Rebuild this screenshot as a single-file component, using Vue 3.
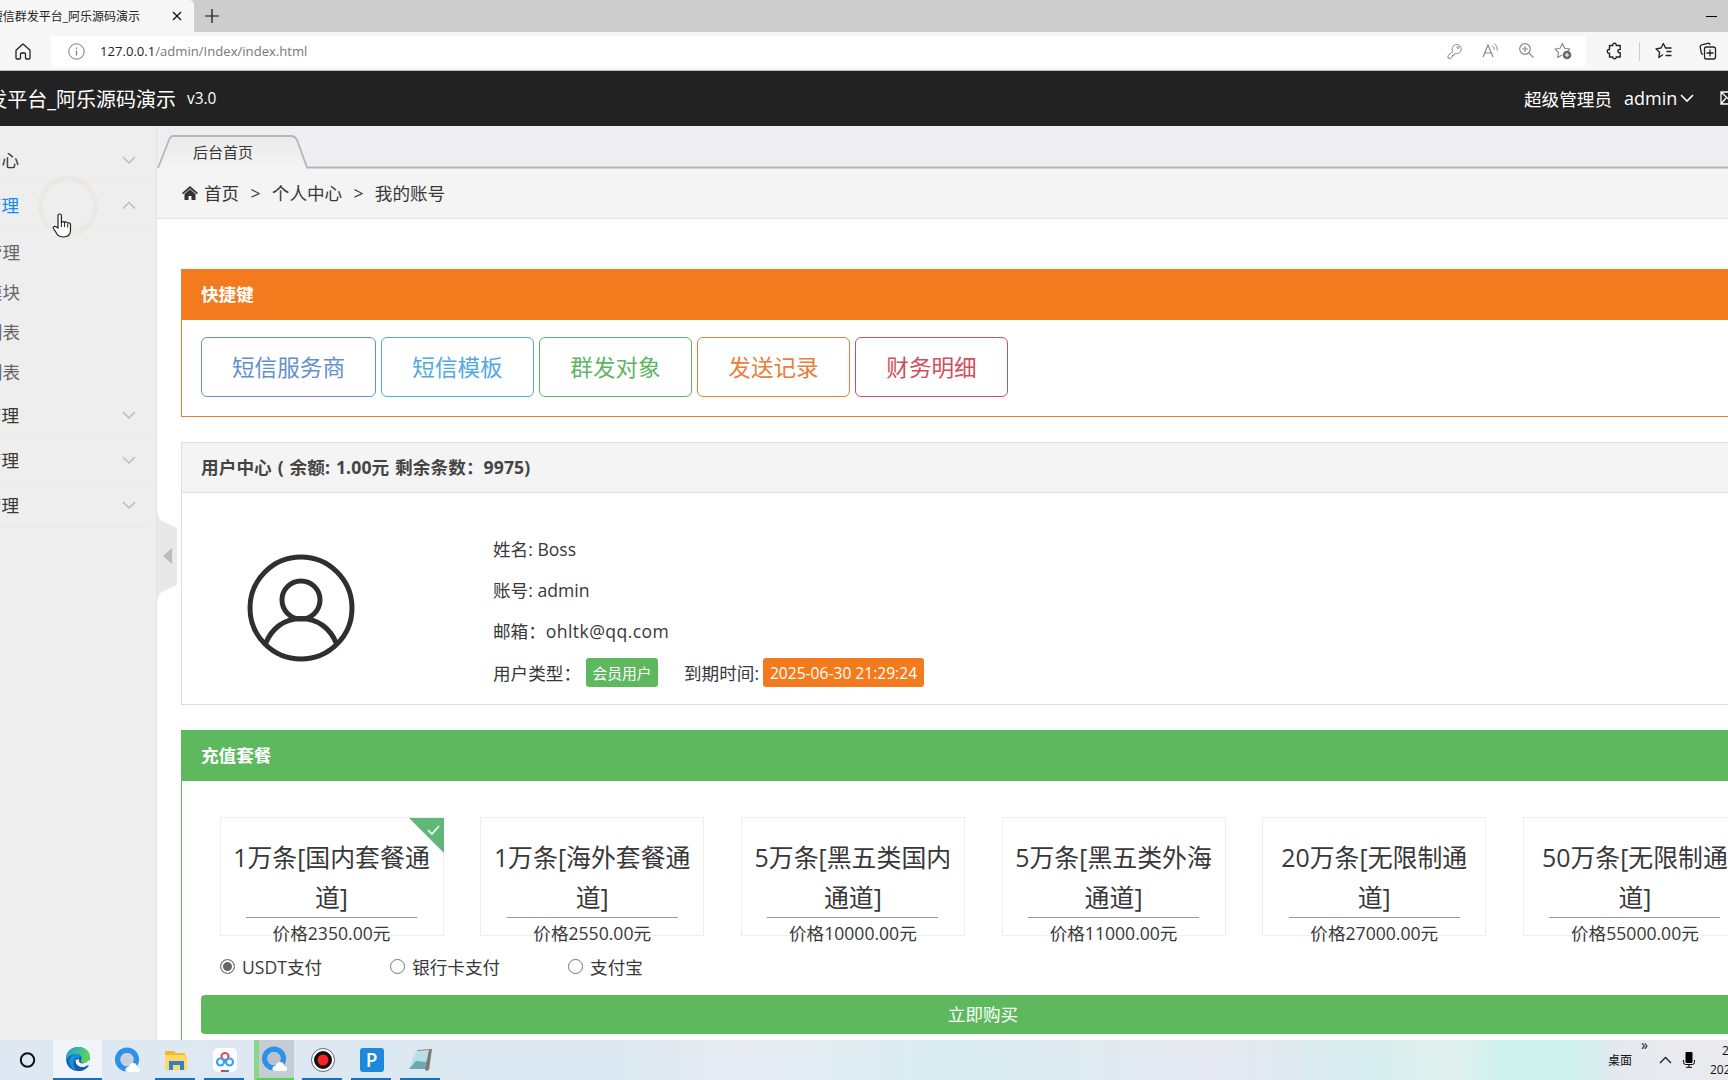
<template>
  <div class="screen">
    <div class="tabstrip">
      <div class="browser-tab">
        <div class="tab-title"><span>短信群发平台_阿乐源码演示</span></div>
        <svg class="tab-close" width="10" height="10" viewBox="0 0 10 10"><path d="M1 1l8 8M9 1l-8 8" stroke="#111" stroke-width="1.3" /></svg>
      </div>
      <svg class="tab-new" width="14" height="14" viewBox="0 0 14 14"><path d="M7 0v14M0 7h14" stroke="#111" stroke-width="1.2" /></svg>
      <span class="minimize"></span>
    </div>

    <div class="toolbar">
      <svg class="home" width="16" height="17" viewBox="0 0 16 17"><path d="M1 7.2L8 1l7 6.2V15q0 1-1 1h-2.500q-1 0-1-1v-4q0-1-1-1h-3q-1 0-1 1v4q0 1-1 1H2q-1 0-1-1z" fill="none" stroke="#222" stroke-width="1.3" stroke-linejoin="round" /></svg>
      <div class="address">
        <svg width="17" height="17" viewBox="0 0 17 17"><circle cx="8.500" cy="8.500" r="7.700" fill="none" stroke="#777" /><path d="M8.500 7.500v5M8.500 4.500v1.500" stroke="#777" stroke-width="1.200" /></svg>
        <span class="url"><b>127.0.0.1</b>/admin/Index/index.html</span>
        <div class="address-icons">
          <svg width="18" height="18" viewBox="0 0 18 18"><path d="M6.800 9.500A4.600 4.600 0 1 1 9.500 11.500L8 12v1.500H6.300V15L5 16.200H2v-2.500z" fill="none" stroke="#888" stroke-linejoin="round" /><circle cx="12" cy="5.500" r="1" fill="none" stroke="#888" /></svg>
          <svg width="18" height="18" viewBox="0 0 18 18"><path d="M1 15L6 3l5 12M3 11h6.200" fill="none" stroke="#888" stroke-width="1.200" /><path d="M10 3.500q2.500 1.500 2.300 4.500M12.300 1.500q3.500 2.500 3 7" fill="none" stroke="#888" /></svg>
          <svg width="18" height="18" viewBox="0 0 18 18"><path d="M10.800 10.800L15.500 15.500M4 7h6M7 4v6" stroke="#888" stroke-width="1.200" /><circle cx="7" cy="7" r="5.300" fill="none" stroke="#888" stroke-width="1.200" /></svg>
          <svg width="18" height="18" viewBox="0 0 18 18"><path d="M8 13l-4.300 2.400.8-5L1 7l5-.7L8.400 1.500l2.200 4.800 5.200.7-2 2" fill="none" stroke="#888" stroke-linejoin="round" stroke-width="1.100" /><circle cx="13" cy="13" r="4.300" fill="#666" /><path d="M13 10.800v4.400M10.800 13h4.400" stroke="#fff" /></svg>
        </div>
      </div>
      <div class="browser-icons">
        <svg width="18" height="18" viewBox="0 0 18 18"><path d="M3.500 3.500h3.300q-.2-2.200 1.700-2.200t1.700 2.200h4v4q-2.400-.2-2.400 1.600t2.400 1.600V15h-4q.1 1.700-1.700 1.700T6.800 15H3.500v-3.800q-2.200.1-2.200-1.900t2.200-1.800z" fill="none" stroke="#222" stroke-width="1.400" stroke-linejoin="round" /></svg>
        <i class="sep"></i>
        <svg width="18" height="18" viewBox="0 0 18 18"><path d="M8 12.500l-4.200 3 .8-5.300L1 6.800l5-.8 2.400-4.500L10.500 6h6M11.500 9.500h5M10.500 13.500h6" fill="none" stroke="#222" stroke-width="1.300" stroke-linejoin="round" /></svg>
        <svg width="18" height="18" viewBox="0 0 18 18"><path d="M4 12.500q-1.500-.5-1.800-2L1.200 5q-.2-1.800 1.500-2.200l6-1.500q1.800-.3 2.500 1.500" fill="none" stroke="#222" stroke-width="1.300" /><rect x="5.500" y="5" width="11" height="12" rx="2" fill="none" stroke="#222" stroke-width="1.300" /><path d="M11 7.500v7M7.500 11h7" stroke="#222" stroke-width="1.300" /></svg>
      </div>
    </div>

    <header class="header">
      <div class="site-name"><span>发平台_阿乐源码演示</span></div>
      <span class="version">v3.0</span>
      <div class="account">
        <span class="role">超级管理员</span>
        <span class="user">admin</span>
        <svg class="user-arrow" width="14" height="9" viewBox="0 0 14 9"><path d="M1 1l6 6 6-6" fill="none" stroke="#fff" stroke-width="1.600" /></svg>
        <svg width="17" height="14" viewBox="0 0 17 14"><path d="M1 1h15v12H1zl7.500 7L16 1M1 13l5-6M16 13l-5-6" fill="none" stroke="#fff" stroke-width="1.300" /></svg>
      </div>
    </header>

    <div class="main">
      <aside class="sidebar">
        <template v-for="(item, i) in menu" :key="i">
          <div class="menu-item" :class="{ open: item.open }">
            <div class="clip"><span>{{ item.name }}</span></div>
            <svg width="14" height="9" viewBox="0 0 14 9"><path :d="item.open ? 'M1 7.500l6-6 6 6' : 'M1 1l6 6 6-6'" fill="none" stroke="#bbb" stroke-width="1.500" /></svg>
          </div>
          <div v-if="item.open" class="submenu">
            <div v-for="(sub, j) in item.children" :key="j" class="submenu-item">
              <div class="clip"><span>{{ sub }}</span></div>
            </div>
          </div>
        </template>
        <svg class="handle" width="21" height="88" viewBox="0 0 21 88"><path d="M0 0v88l3-7 17-8V16L3 8z" fill="#e8e8e8" /><path d="M6 44l9-8v16z" fill="#bbb" /></svg>
        <span class="ripple"></span>
        <svg class="cursor" width="20" height="26" viewBox="0 0 20 26"><path d="M6 15V3q0-2 1.700-2T9.400 3v7q.3-1.500 1.700-1.300T12.600 10q.3-1.200 1.600-1t1.500 1.600q.3-1 1.500-.8T18.500 11.500V17q0 7-7 7-4.500 0-6.500-3L1.500 15.500q-.7-1.500.7-2T4.500 14z" fill="#fff" stroke="#222" stroke-width="1.200" /><path d="M9.400 9v5M12.600 10v4M15.700 11v3.500" stroke="#222" /></svg>
      </aside>

      <div class="content">
        <div class="page-tabs">
          <svg width="1571" height="44" viewBox="0 0 1571 44">
            <defs><linearGradient id="tabFill" x1="0" y1="0" x2="0" y2="1"><stop offset="0" stop-color="#eaeaea" /><stop offset="1" stop-color="#f4f4f4" /></linearGradient></defs>
            <path d="M1 43L12 14q1.500-4 4-4h118q4 0 6 4l10 29z" fill="url(#tabFill)" />
            <path d="M1 42L12 14q1.500-4 4-4h118q4 0 6 4l10 27.500H1571" fill="none" stroke="#b5b6b8" stroke-width="1.800" />
          </svg>
          <span class="page-tab">后台首页</span>
        </div>
        <nav class="crumbs">
          <svg width="16" height="14" viewBox="0 0 16 14"><path d="M8 0l8 7-1.200 1.300L8 2.400 1.200 8.300 0 7z" fill="#333" /><path d="M8 3.200l5.500 4.800V14H9.500V10H6.500V14H2.500V8z" fill="#333" /></svg>
          <span>首页</span><i>&gt;</i><span>个人中心</span><i>&gt;</i><span>我的账号</span>
        </nav>

        <div class="page">
          <section class="panel orange">
            <h3>快捷键</h3>
            <div class="shortcuts">
              <a v-for="s in shortcuts" :key="s.name" href="#" :class="s.type">{{ s.name }}</a>
            </div>
          </section>

          <section class="panel plain">
            <h3>用户中心 ( 余额: 1.00元 剩余条数：9975)</h3>
            <div class="profile">
              <svg width="108" height="108" viewBox="0 0 108 108" fill="none" stroke="#2f2f2f" stroke-width="5">
                <circle cx="54" cy="54" r="51" />
                <circle cx="54" cy="46" r="19" />
                <path d="M18.500 90C24 75 37 64.500 54 64.500S84 75 89.500 90" />
              </svg>
              <div class="user-info">
                <p>姓名: Boss</p>
                <p>账号: admin</p>
                <p>邮箱：<span class="email">ohltk@qq.com</span></p>
                <p class="last"><span class="kind">用户类型：</span><em class="tag green">会员用户</em><span class="expire">到期时间:</span><em class="tag orange">2025-06-30 21:29:24</em></p>
              </div>
            </div>
          </section>

          <section class="panel success">
            <h3>充值套餐</h3>
            <div class="recharge">
              <div class="plans">
                <div v-for="(p, i) in plans" :key="p.price" class="plan" @click="selected = i">
                  <svg v-if="selected === i" class="check" width="35" height="35" viewBox="0 0 35 35"><path d="M0 0h35v35z" fill="#5fb878" /><path d="M19 12l4 4L30 8" fill="none" stroke="#fff" stroke-width="1.600" /></svg>
                  <div class="plan-name">{{ p.name[0] }}<br>{{ p.name[1] }}</div>
                  <div class="plan-line"></div>
                  <div class="plan-price">价格{{ p.price }}元</div>
                </div>
              </div>
              <div class="pays">
                <label v-for="p in pays" :key="p" @click="pay = p"><i :class="{ on: pay === p }"></i>{{ p }}</label>
              </div>
              <button class="buy">立即购买</button>
            </div>
          </section>
        </div>
      </div>
    </div>

    <footer class="taskbar">
      <div class="apps">
        <div class="app"><svg width="24" height="24" viewBox="0 0 24 24"><circle cx="10.500" cy="12" r="6.700" fill="none" stroke="#111" stroke-width="2" /></svg></div>
        <div class="app focus">
          <svg width="26" height="26" viewBox="0 0 26 26">
            <defs><linearGradient id="edgeTop" x1="0" y1="0" x2="1" y2=".3"><stop offset="0" stop-color="#1b9de2" /><stop offset="1" stop-color="#5bd45b" /></linearGradient></defs>
            <circle cx="13" cy="13" r="12" fill="#1262b3" />
            <path d="M1 13C1 5 7 1 13 1c8 0 12 5 12 10 0 4-3 6-6 6-2.500 0-4-1-3-2.500C18 11 15 8 11 8 6 8 2 11 1 15z" fill="url(#edgeTop)" />
            <path d="M11 8c-6 1-8 6-6 11 2 4 5 6 9 6-5-2-7-8-4-12 2-2.500 4-1.500 5-1 0-2-2-4-4-4z" fill="#1a8fd8" />
            <path d="M10.500 14c-.5 5 4 8 9 7l4-2-1.500 3 5 3V12l-5 4c-5 3-9 1-8-3z" fill="#f1f5f9" />
            <path d="M10.500 14c-.5 5 4 8 9 7l4.500-2c-2 4-6 6-11 6-3 0-6-7-2.500-11z" fill="#155cae" />
          </svg>
        </div>
        <div class="app"><svg width="26" height="26" viewBox="0 0 26 26"><circle cx="13" cy="12.500" r="9.300" fill="#dfe9f3" stroke="#2e91e8" stroke-width="5.500" /><circle cx="13" cy="12.500" r="6.500" fill="#cbd0db" /><path d="M14 25q-4-1-2-4 1-2 3-1.500 1-4 5-3.500 3 .5 3 4 3 0 3 3 0 2-3 2z" fill="#fff" /></svg></div>
        <div class="app run"><svg width="26" height="26" viewBox="0 0 26 26"><path d="M2 4h9l2 2h9v17H2z" fill="#f0b72f" /><path d="M2 8h22v15H2z" fill="#ffd868" /><path d="M6 23V14h15v9h-4v-5h-7v5z" fill="#2f83c5" /></svg></div>
        <div class="app run"><svg width="26" height="26" viewBox="0 0 26 26"><rect x="1" y="1" width="24" height="24" rx="5" fill="#fff" /><g fill="none" stroke-width="2.200"><circle cx="13" cy="9.500" r="3.500" stroke="#ee4b58" /><circle cx="8.500" cy="15" r="3.500" stroke="#30a8ef" /><circle cx="17.500" cy="15" r="3.500" stroke="#30a8ef" /></g><path d="M9 24h4" stroke="#e34" stroke-width="2" /><path d="M13 24h4" stroke="#38c" stroke-width="2" /></svg></div>
        <div class="app active"><svg width="26" height="26" viewBox="0 0 26 26"><circle cx="13" cy="12.500" r="9.300" fill="#dfe9f3" stroke="#2e91e8" stroke-width="5.500" /><circle cx="13" cy="12.500" r="6.500" fill="#bcc2cb" /><path d="M14 25q-4-1-2-4 1-2 3-1.500 1-4 5-3.500 3 .5 3 4 3 0 3 3 0 2-3 2z" fill="#fff" /></svg></div>
        <div class="app run"><svg width="26" height="26" viewBox="0 0 26 26"><circle cx="13" cy="13" r="10" fill="#111" stroke="#fff" stroke-width="2" /><circle cx="13" cy="13" r="11.500" fill="none" stroke="#333" stroke-width=".7" /><circle cx="13" cy="13" r="5.500" fill="#fa2323" /></svg></div>
        <div class="app run"><span class="p-app">P</span></div>
        <div class="app run"><svg width="26" height="26" viewBox="0 0 26 26"><path d="M9 3l15-1-3 21-3 1z" fill="#7c7a72" /><path d="M8 4l13-1-4 18-16 1z" fill="#b9dfe6" /><path d="M1 22l7-8 10 1-1 7z" fill="#6ba8b0" /></svg></div>
      </div>
      <div class="tray">
        <span class="desk">桌面</span><span class="more">»</span>
        <svg width="13" height="8" viewBox="0 0 13 8"><path d="M1 7l5.500-5.500L12 7" fill="none" stroke="#222" stroke-width="1.400" /></svg>
        <svg width="12" height="16" viewBox="0 0 12 16"><rect x="2.500" y="0" width="7" height="11" rx="1" fill="#000" /><path d="M.6 8v2.500q0 2 2 2h6.800q2 0 2-2V8M6 12.500V15M3 15.300h6" fill="none" stroke="#000" /></svg>
        <div class="clock"><span>2</span><span>202</span></div>
      </div>
    </footer>
  </div>
</template>

<script setup>
import { ref } from "vue";

const menu = [
  { name: "个人中心" },
  { name: "短信管理", open: true, children: ["短信管理", "短信模块", "群发列表", "发送列表"] },
  { name: "财务管理" },
  { name: "用户管理" },
  { name: "系统管理" },
];

const shortcuts = [
  { name: "短信服务商", type: "primary" },
  { name: "短信模板", type: "info" },
  { name: "群发对象", type: "success" },
  { name: "发送记录", type: "warning" },
  { name: "财务明细", type: "danger" },
];

const plans = [
  { name: ["1万条[国内套餐通", "道]"], price: "2350.00" },
  { name: ["1万条[海外套餐通", "道]"], price: "2550.00" },
  { name: ["5万条[黑五类国内", "通道]"], price: "10000.00" },
  { name: ["5万条[黑五类外海", "通道]"], price: "11000.00" },
  { name: ["20万条[无限制通", "道]"], price: "27000.00" },
  { name: ["50万条[无限制通", "道]"], price: "55000.00" },
];

const pays = ["USDT支付", "银行卡支付", "支付宝"];

const selected = ref(0);
const pay = ref("USDT支付");
</script>

<style>
body {
  margin: 0;
  overflow: hidden;
}
</style>

<style scoped>
* {
  box-sizing: border-box;
}

svg {
  display: block;
  flex: none;
}

.screen {
  display: flex;
  flex-direction: column;
  width: 1728px;
  height: 1080px;
  overflow: hidden;
  background: #fff;
  color: #383838;
  font-family: "Open Sans", "Noto Sans CJK SC", sans-serif;
  font-size: 17.6px;
  white-space: nowrap;
}

/* browser */
.tabstrip {
  display: flex;
  align-items: center;
  height: 32px;
  flex: none;
  background: #cdcdcd;
}

.browser-tab {
  display: flex;
  align-items: center;
  width: 194px;
  height: 32px;
  background: #f7f7f7;
  border-radius: 0 5px 0 0;
}

.tab-title {
  display: flex;
  justify-content: flex-end;
  width: 140px;
  overflow: hidden;
  font-size: 12px;
  color: #222;
}

.tab-close {
  margin-left: 32px;
}

.tab-new {
  margin-left: 11px;
}

.minimize {
  width: 11px;
  height: 1px;
  margin-left: auto;
  margin-right: 11px;
  background: #000;
}

.toolbar {
  display: flex;
  align-items: center;
  height: 39px;
  flex: none;
  padding: 0 11px 0 15px;
  background: #f7f7f7;
  border-bottom: 1px solid #bbb;
}

.address {
  display: flex;
  align-items: center;
  width: 1535px;
  height: 31px;
  margin-left: 20px;
  padding: 0 14px 0 17px;
  background: #fff;
  border-radius: 3px;
}

.url {
  margin-left: 15px;
  font-size: 13.1px;
  color: #777;
}

.url b {
  font-weight: 400;
  color: #222;
}

.address-icons {
  display: flex;
  gap: 18px;
  margin-left: auto;
}

.browser-icons {
  display: flex;
  align-items: center;
  margin-left: 20px;
}

.sep {
  width: 1px;
  height: 19px;
  margin: 0 15px 0 15px;
  background: #ccc;
}

.browser-icons svg + svg {
  margin-left: 26px;
}

/* header */
.header {
  display: flex;
  align-items: center;
  height: 55px;
  flex: none;
  padding-bottom: 1px;
  background: #222;
  color: #fff;
}

.site-name {
  display: flex;
  justify-content: flex-end;
  width: 176px;
  overflow: hidden;
  font-size: 20px;
}

.version {
  margin-left: 11px;
  font-size: 15.4px;
}

.account {
  display: flex;
  align-items: center;
  width: 204px;
  margin-left: auto;
}

.user {
  width: 55px;
  margin-left: 12px;
  font-size: 18px;
}

.user-arrow {
  margin: 1px 26px 0 3px;
}

.main {
  display: flex;
  height: 914px;
  flex: none;
}

/* sidebar */
.sidebar {
  position: relative;
  width: 157px;
  flex: none;
  padding-top: 12px;
  background: #eee;
  border-right: 1px solid #e2e2e2;
}

.menu-item {
  display: flex;
  align-items: center;
  justify-content: space-between;
  width: 147px;
  height: 45px;
  padding-right: 11px;
  border-bottom: 1px solid #e9e9e9;
}

.menu-item.open {
  color: #148cf1;
}

.clip {
  display: flex;
  justify-content: flex-end;
  width: 19px;
  overflow: hidden;
}

.menu-item .clip {
  padding-bottom: 2px;
}

.submenu {
  padding: 4px 0 1px;
  color: #666;
}

.submenu-item {
  height: 40px;
  line-height: 40px;
}

.submenu-item .clip {
  width: 20px;
}

.handle {
  position: absolute;
  left: 157px;
  top: 386px;
  z-index: 2;
}

.ripple {
  position: absolute;
  left: 38px;
  top: 50px;
  width: 60px;
  height: 60px;
  border: 5px solid rgba(235, 205, 200, 0.2);
  border-radius: 50%;
}

.cursor {
  position: absolute;
  left: 52px;
  top: 87px;
}

/* page */
.content {
  width: 1571px;
  overflow: hidden;
}

.page-tabs {
  position: relative;
  height: 43px;
  background: #eeeef0;
}

.page-tab {
  position: absolute;
  left: 36px;
  top: 15px;
  font-size: 15px;
  line-height: 22px;
}

.crumbs {
  display: flex;
  align-items: center;
  height: 50px;
  padding: 0 0 2px 25px;
  background: #f4f4f4;
  border-bottom: 1px solid #e3e3e3;
}

.crumbs svg {
  margin-right: 6px;
}

.crumbs i {
  width: 32.6px;
  text-align: center;
  font-style: normal;
}

.page {
  width: 1628px;
  padding: 50px 0 0 24px;
}

.panel {
  margin-bottom: 25px;
  border: 1px solid #ddd;
}

.panel h3 {
  height: 50px;
  margin: 0;
  padding-left: 19px;
  line-height: 48px;
  font-size: 17.6px;
  font-weight: 700;
}

.panel.orange {
  height: 148px;
  border-color: #e0803a;
}

.panel.orange h3 {
  background: #f37b1d;
  color: #fff;
}

.panel.plain {
  height: 263px;
}

.panel.plain h3 {
  background: #f4f4f4;
  border-bottom: 1px solid #ddd;
  color: #444;
  letter-spacing: 0.1px;
  word-spacing: 1.2px;
}

.panel.success {
  height: 340px;
  border-color: #5eb95e;
}

.panel.success h3 {
  background: #5eb95e;
  color: #fff;
}

.shortcuts {
  display: flex;
  gap: 5px;
  padding: 17px 19px;
}

.shortcuts a {
  width: 153px;
  height: 60px;
  border: 1px solid;
  border-radius: 6px;
  line-height: 60px;
  text-align: center;
  font-size: 22.6px;
  text-decoration: none;
}

.shortcuts .primary {
  width: 175px;
  color: #6390cc;
}

.shortcuts .info {
  color: #52a8e0;
}

.shortcuts .success {
  color: #5eb464;
}

.shortcuts .warning {
  color: #e67e3c;
}

.shortcuts .danger {
  color: #cf4f5a;
}

.profile {
  display: flex;
  padding: 36px 0 0 65px;
}

.profile > svg {
  margin-top: 25px;
}

.user-info {
  margin-left: 138px;
}

.user-info p {
  height: 41px;
  margin: 0;
  line-height: 40px;
}

.email {
  letter-spacing: 0.4px;
}

.user-info .last {
  display: flex;
  align-items: center;
}

.kind {
  width: 93px;
}

.tag {
  height: 29px;
  border-radius: 3px;
  line-height: 31px;
  text-align: center;
  font-size: 14.8px;
  font-style: normal;
  color: #fff;
}

.tag.green {
  width: 72px;
  background: #5eb95e;
}

.tag.orange {
  width: 161px;
  background: #f37b1d;
  font-size: 15.6px;
}

.expire {
  width: 79px;
  margin-left: 26px;
}

.recharge {
  width: 1602px;
  padding: 36px 19px 0;
}

.plans {
  display: grid;
  grid-template-columns: repeat(6, 260.7px);
}

.plan {
  position: relative;
  width: 224px;
  height: 119px;
  margin-left: 18.500px;
  padding-top: 19px;
  border: 1px solid #eee;
  text-align: center;
}

.check {
  position: absolute;
  right: -1px;
  top: 0;
}

.plan-name {
  height: 80px;
  line-height: 40px;
  font-size: 24.9px;
}

.plan-line {
  width: 171px;
  height: 1px;
  margin: 0 auto;
  background: #999;
}

.plan-price {
  line-height: 30px;
}

.pays {
  display: flex;
  height: 59px;
  padding: 0 0 0 19px;
}

.pays label {
  display: flex;
  align-items: center;
  height: 60px;
  margin-right: 68px;
}

.pays i {
  width: 15px;
  height: 15px;
  margin-right: 7px;
  border: 1px solid #767676;
  border-radius: 50%;
}

.pays i.on {
  background: #666;
  box-shadow: inset 0 0 0 2px #fff;
}

.buy {
  display: block;
  width: 1564px;
  height: 39px;
  padding: 0;
  border: 0;
  border-radius: 4px;
  background: #5eb95e;
  color: #fff;
  font: inherit;
  line-height: 39px;
}

/* taskbar */
.taskbar {
  display: flex;
  justify-content: space-between;
  height: 40px;
  flex: none;
  background: linear-gradient(90deg, #dee8f2 0, #dce9f2 35%, #e6ebf2 43%, #d9edf3 55%, #e6e9f1 70%, #d8eef0 79%, #dff0ed 84%, #cff3ef 87%, #cff3ef 91%, #e6e9ef 94%, #e8eaee);
}

.apps {
  display: flex;
  padding-left: 4px;
}

.app {
  position: relative;
  display: flex;
  align-items: center;
  justify-content: center;
  width: 49px;
  height: 40px;
}

.app.focus {
  background: #f1f5f9;
  border-bottom: 2px solid #1373c0;
}

.app.run::after {
  content: '';
  position: absolute;
  left: 4px;
  bottom: 0;
  width: 40px;
  height: 2px;
  background: #1373c0;
}

.app.active {
  width: 40px;
  margin: 0 4px 0 5px;
  padding-right: 5px;
  background: #c5cdd4;
  border-left: 5px solid #8fd48d;
  border-bottom: 2px solid #4fd844;
}

.p-app {
  width: 24px;
  height: 24px;
  border-radius: 3px;
  background: #1e88dd;
  color: #fff;
  font-size: 19px;
  font-weight: 600;
  line-height: 24px;
  text-align: center;
}

.tray {
  display: flex;
  align-items: center;
  width: 120px;
  font-size: 12px;
  color: #111;
}

.desk {
  width: 33px;
}

.more {
  width: 18px;
  height: 40px;
  line-height: 10px;
  font-size: 14px;
}

.tray svg + svg {
  margin-left: 11px;
}

.clock {
  display: flex;
  flex-direction: column;
  align-items: flex-end;
  width: 18px;
  margin-left: 15px;
  line-height: 19px;
}

.clock span {
  width: 6px;
}

.clock span + span {
  width: 18px;
}
</style>
